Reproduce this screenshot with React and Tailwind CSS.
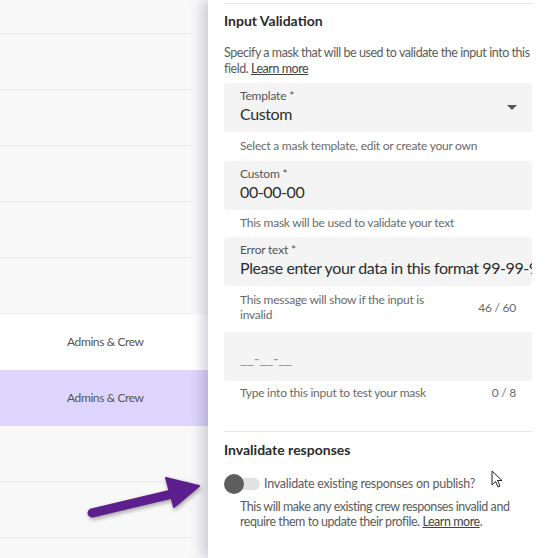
import React from "react";

const font = { fontFamily: "Lato, 'Noto Sans', sans-serif" };

function Row({ children, className = "", line = true }) {
  return (
    <div className={`h-[56px] shrink-0 ${className}`}>
      <div className={`h-full mr-[16px] flex items-center ${line ? "border-b border-[#ececee]" : ""}`}>
        {children}
      </div>
    </div>
  );
}

function Field({ label, value, caret, placeholder }) {
  return (
    <div className="relative h-[49px] bg-[#f4f4f4] rounded-[3px] pl-[16px] overflow-hidden">
      {label ? (
        <div className="pt-[5px]">
          <div className="text-[12px] leading-[16px] text-[#555] tracking-[-0.2px]">{label}</div>
          <div className="text-[16px] leading-[20px] text-[#2e2e2e] whitespace-nowrap overflow-hidden tracking-[-0.4px]">{value}</div>
        </div>
      ) : (
        <div className="pt-[16px] text-[16px] leading-[20px] text-[#9a9a9a] tracking-[-0.5px]">{placeholder}</div>
      )}
      {caret && (
        <svg className="absolute right-[15px] top-[22px]" width="10" height="6" viewBox="0 0 10 6">
          <path d="M0 0 L10 0 L5 5 Z" fill="#555" />
        </svg>
      )}
    </div>
  );
}

export default function App() {
  return (
    <div className="relative w-[546px] h-[558px] overflow-hidden flex bg-[#f8f8f9]" style={font}>
      {/* left table */}
      <div className="w-[208px] shrink-0 flex flex-col">
        <div className="h-[34px] shrink-0">
          <div className="h-full mr-[16px] border-b border-[#ececee]" />
        </div>
        <Row />
        <Row />
        <Row />
        <Row />
        <Row />
        <Row className="bg-white" line={false}>
          <span className="ml-[67px] text-[12px] text-[#555] tracking-[-0.4px]">Admins &amp; Crew</span>
        </Row>
        <Row className="bg-[#ddd5fb]" line={false}>
          <span className="ml-[67px] text-[12px] text-[#555] tracking-[-0.4px]">Admins &amp; Crew</span>
        </Row>
        <Row />
        <Row />
      </div>

      {/* right panel */}
      <div className="relative w-[338px] shrink-0 bg-white pl-[16px] pr-[14px] shadow-[-5px_0_12px_rgba(60,60,90,0.25)]">
        <div className="mt-[3px] h-px bg-[#e6e6e6]" />
        <div className="mt-[7px] text-[14px] leading-[20px] font-bold text-[#2b2b2b]">Input Validation</div>
        <div className="mt-[14px] text-[12.5px] leading-[16px] text-[#5c5c5c] tracking-[-0.45px]">
          Specify a mask that will be used to validate the input into this field.{" "}
          <span className="underline text-[#444]">Learn more</span>
        </div>
        <div className="mt-[6px]">
          <Field label="Template *" value="Custom" caret />
        </div>
        <div className="mt-[6px] pl-[16px] text-[12px] leading-[16px] text-[#6a6a6a] tracking-[-0.25px]">
          Select a mask template, edit or create your own
        </div>
        <div className="mt-[7px]">
          <Field label="Custom *" value="00-00-00" />
        </div>
        <div className="mt-[5px] pl-[16px] text-[12px] leading-[16px] text-[#6a6a6a] tracking-[-0.25px]">
          This mask will be used to validate your text
        </div>
        <div className="mt-[6px]">
          <Field label="Error text *" value="Please enter your data in this format 99-99-99" />
        </div>
        <div className="mt-[6px] pl-[16px] pr-[16px] flex items-center justify-between text-[12px] leading-[15px] text-[#6a6a6a] tracking-[-0.25px]">
          <span className="w-[190px]">This message will show if the input is invalid</span>
          <span>46 / 60</span>
        </div>
        <div className="mt-[10px]">
          <Field placeholder="__-__-__" />
        </div>
        <div className="mt-[4px] pl-[16px] pr-[16px] flex items-center justify-between text-[12px] leading-[16px] text-[#6a6a6a] tracking-[-0.25px]">
          <span>Type into this input to test your mask</span>
          <span>0 / 8</span>
        </div>
        <div className="mt-[30px] h-px bg-[#e6e6e6]" />
        <div className="mt-[8px] text-[14px] leading-[20px] font-bold text-[#2b2b2b]">Invalidate responses</div>
        <div className="mt-[14px] flex items-center h-[20px]">
          <div className="relative w-[36px] h-[20px] shrink-0">
            <div className="absolute left-[6px] top-[4px] w-[30px] h-[12px] rounded-full bg-[#e2e2e2]" />
            <div className="absolute left-0 top-0 w-[20px] h-[20px] rounded-full bg-[#5e5e5e]" />
          </div>
          <span className="ml-[4px] text-[12.5px] text-[#5c5c5c] tracking-[-0.25px]">Invalidate existing responses on publish?</span>
        </div>
        <div className="mt-[5px] pl-[16px] text-[12.5px] leading-[15px] text-[#5c5c5c] tracking-[-0.45px]">
          This will make any existing crew responses invalid and require them to update their profile.{" "}
          <span className="underline text-[#444]">Learn more</span>.
        </div>
      </div>

      {/* annotation arrow */}
      <svg className="absolute left-[84px] top-[470px]" width="124" height="56" viewBox="84 470 124 56" style={{ filter: "drop-shadow(1px 2px 2px rgba(0,0,0,0.35))" }}>
        <path d="M92 513 L172 494" stroke="#5e1f8e" strokeWidth="9" strokeLinecap="round" />
        <path d="M166 478 L199 486 L174 507 Z" fill="#5e1f8e" stroke="#5e1f8e" strokeWidth="2" strokeLinejoin="round" />
      </svg>

      {/* mouse cursor */}
      <svg className="absolute left-[491px] top-[470px]" width="14" height="20" viewBox="0 0 14 20">
        <path d="M1 1 L1 15 L4.5 11.5 L7 17 L9 16 L6.5 10.5 L11 10.5 Z" fill="#fff" stroke="#222" strokeWidth="1" strokeLinejoin="round" />
      </svg>
    </div>
  );
}
